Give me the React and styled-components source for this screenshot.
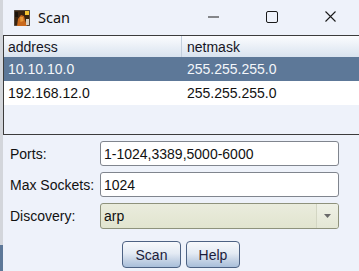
import React from "react";
import styled, { createGlobalStyle } from "styled-components";

const Global = createGlobalStyle`
  html, body { margin: 0; padding: 0; background: #eef2fa; }
  body { font-family: "Liberation Sans", Arial, sans-serif; }
`;

const Window = styled.div`
  width: 359px;
  height: 271px;
  overflow: hidden;
  background:
    linear-gradient(#5d7898, #5d7898) left bottom / 3px 26px no-repeat,
    linear-gradient(#d3d6db, #d3d6db) left top / 3px 100% no-repeat,
    #eef2fa;
  display: flex;
  flex-direction: column;
`;

const TitleBar = styled.div`
  height: 35px;
  display: flex;
  align-items: center;
  flex-shrink: 0;
`;

const AppIcon = styled.svg`
  margin-left: 14px;
  width: 16px;
  height: 16px;
  flex-shrink: 0;
`;

const Title = styled.span`
  margin-left: 8px;
  font-family: "Noto Sans", "Segoe UI", sans-serif;
  font-size: 14.5px;
  color: #111;
  flex: 1;
  margin-top: -2px;
`;

const Caption = styled.div`
  width: 58px;
  height: 35px;
  flex-shrink: 0;
  display: flex;
  align-items: center;
  justify-content: center;
  margin-top: -2px;
  svg { display: block; }
`;

const Body = styled.div`
  flex: 1;
  padding-left: 3px;
  display: flex;
  flex-direction: column;
`;

const Table = styled.div`
  height: 100px;
  box-sizing: border-box;
  border-top: 1px solid #3c3c3c;
  border-left: 1px solid #3c3c3c;
  border-bottom: 1px solid #3c3c3c;
  display: flex;
  flex-direction: column;
`;

const Row = styled.div`
  display: flex;
  height: ${(p) => p.$h}px;
  align-items: center;
  font-size: 14px;
  background: ${(p) => p.$bg};
  color: ${(p) => p.$fg};
  flex-shrink: 0;
`;

const Cell = styled.div`
  width: ${(p) => (p.$w ? `${p.$w}px` : "auto")};
  flex: ${(p) => (p.$w ? "none" : "1")};
  height: 100%;
  display: flex;
  align-items: center;
  box-sizing: border-box;
  padding-left: ${(p) => p.$pl}px;
  border-right: ${(p) => (p.$div ? "1px solid #c3cfdd" : "none")};
`;

const Filler = styled.div`
  flex: 1;
`;

const Form = styled.div`
  display: grid;
  grid-template-columns: 90px 239px;
  row-gap: 6px;
  padding: 6px 0 0 7px;
  align-items: center;
`;

const Label = styled.label`
  font-size: 14px;
  color: #111;
`;

const TextField = styled.div`
  height: 25px;
  box-sizing: border-box;
  border: 1px solid #80858e;
  border-radius: 3px;
  background: #fff;
  font-size: 14px;
  color: #111;
  padding-left: 3px;
  display: flex;
  align-items: center;
`;

const Combo = styled.div`
  height: 26px;
  box-sizing: border-box;
  border: 1px solid #8e927c;
  border-radius: 3px;
  background: linear-gradient(#eaecdd, #e1e4cf);
  font-size: 14px;
  color: #111;
  display: flex;
  align-items: stretch;
`;

const ComboText = styled.div`
  flex: 1;
  padding-left: 3px;
  display: flex;
  align-items: center;
`;

const ComboArrow = styled.div`
  width: 21px;
  border-left: 1px solid #d3d6c3;
  background: linear-gradient(#eff1e6, #e4e7d5);
  display: flex;
  align-items: center;
  justify-content: center;
  border-radius: 0 2px 2px 0;
`;

const Buttons = styled.div`
  display: flex;
  justify-content: center;
  gap: 5px;
  margin-top: 12px;
`;

const Button = styled.button`
  width: ${(p) => p.$w}px;
  height: 27px;
  box-sizing: border-box;
  border: 1px solid #4d6283;
  border-radius: 4px;
  background: linear-gradient(#f7f9fc 0%, #e4ebf4 45%, #c2d1e4 75%, #a9bfda 100%);
  font-family: "Liberation Sans", Arial, sans-serif;
  font-size: 14px;
  color: #1c1c3a;
  padding: 0;
`;

export default function App() {
  return (
    <>
      <Global />
      <Window>
        <TitleBar>
          <AppIcon viewBox="0 0 16 16">
            <rect x="0" y="0" width="16" height="16" fill="#3a2410" />
            <rect x="0" y="0" width="16" height="16" fill="none" stroke="#6b6b6b" strokeWidth="1" />
            <path d="M3 16 L4 9 L7 5 L10 6 L11 10 L13 16 Z" fill="#c9691c" />
            <path d="M6 7 L9 7 L9.5 11 L6.5 12 Z" fill="#e89a3a" />
            <rect x="11" y="1" width="4" height="4" fill="#f2c230" />
            <rect x="12" y="9" width="3" height="6" fill="#d9d2c4" />
            <rect x="1" y="2" width="3" height="5" fill="#1a120a" />
          </AppIcon>
          <Title>Scan</Title>
          <Caption>
            <svg width="12" height="2" viewBox="0 0 12 2">
              <rect x="0" y="0.5" width="11" height="1" fill="#1a1a1a" />
            </svg>
          </Caption>
          <Caption>
            <svg width="12" height="12" viewBox="0 0 12 12">
              <rect x="0.5" y="0.5" width="11" height="11" rx="1.5" fill="none" stroke="#1a1a1a" strokeWidth="1" />
            </svg>
          </Caption>
          <Caption>
            <svg width="11" height="11" viewBox="0 0 11 11">
              <path d="M0.5 0.5 L10.5 10.5 M10.5 0.5 L0.5 10.5" stroke="#1a1a1a" strokeWidth="1.1" />
            </svg>
          </Caption>
        </TitleBar>
        <Body>
          <Table>
            <Row $h={21} $bg="linear-gradient(#fbfcfe, #d9e3ef)" $fg="#151525">
              <Cell $w={178} $pl={4} $div>address</Cell>
              <Cell $pl={5}>netmask</Cell>
            </Row>
            <Row $h={24} $bg="#5d7898" $fg="#f3f6fa">
              <Cell $w={178} $pl={4}>10.10.10.0</Cell>
              <Cell $pl={5}>255.255.255.0</Cell>
            </Row>
            <Row $h={24} $bg="#ffffff" $fg="#111">
              <Cell $w={178} $pl={4}>192.168.12.0</Cell>
              <Cell $pl={5}>255.255.255.0</Cell>
            </Row>
            <Filler />
          </Table>
          <Form>
            <Label>Ports:</Label>
            <TextField>1-1024,3389,5000-6000</TextField>
            <Label>Max Sockets:</Label>
            <TextField>1024</TextField>
            <Label>Discovery:</Label>
            <Combo>
              <ComboText>arp</ComboText>
              <ComboArrow>
                <svg width="7" height="4" viewBox="0 0 7 4">
                  <path d="M0 0 L7 0 L3.5 4 Z" fill="#6a6a6a" />
                </svg>
              </ComboArrow>
            </Combo>
          </Form>
          <Buttons>
            <Button $w={59}>Scan</Button>
            <Button $w={54}>Help</Button>
          </Buttons>
        </Body>
      </Window>
    </>
  );
}
